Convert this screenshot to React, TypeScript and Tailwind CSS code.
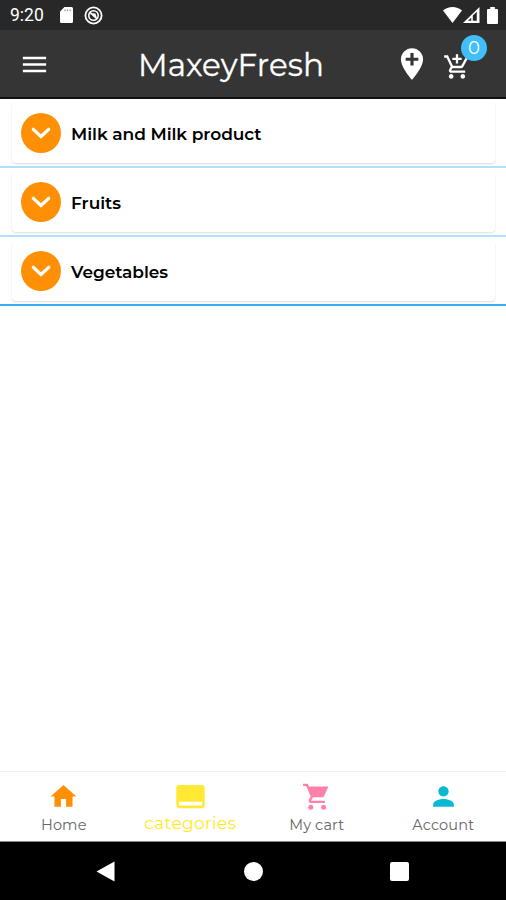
import type { ReactNode } from "react";
import { MdAddLocation, MdAddShoppingCart, MdCallToAction, MdHome, MdMenu, MdPerson } from "react-icons/md";

const categories = [
  { name: "Milk and Milk product", line: "border-[#b3e1fb]" },
  { name: "Fruits", line: "border-[#b3e1fb]" },
  { name: "Vegetables", line: "border-[#35b0e8]" },
];

function CartIcon() {
  return (
    <svg className="h-[31px] w-[31px]" viewBox="0 0 31 31" fill="#ff80a8">
      <path d="M6.5 5.6H27.4L22.6 16.3H10.6Z" />
      <path d="M2 3.9H6L11 15.6L8.8 19.4Q8.5 20.9 10 20.9H23.8" fill="none" stroke="#ff80a8" strokeWidth="2.4" />
      <circle cx="9.8" cy="26.2" r="2.5" />
      <circle cx="22.6" cy="26.2" r="2.5" />
    </svg>
  );
}

function StatusBar() {
  return (
    <div className="flex h-[30px] shrink-0 items-center bg-[#282828] pr-[8px] pl-[10px] text-white">
      <span className="w-[50px] pt-[2px] font-['Roboto',sans-serif] text-[17.5px] leading-none">9:20</span>
      <svg className="h-[16px] w-[13px]" viewBox="0 0 13 16" fill="currentColor">
        <path d="M4.5 0H11.5Q13 0 13 1.5V14.5Q13 16 11.5 16H1.5Q0 16 0 14.5V4.5Z" />
        <path d="M5 2.5v1.8M7.5 2.5v1.8M10 2.5v1.8" stroke="#999" strokeWidth="1.3" />
      </svg>
      <svg className="ml-[11px] h-[19px] w-[19px]" viewBox="0 0 19 19" fill="none" stroke="currentColor">
        <circle cx="9.5" cy="9.5" r="8.1" strokeWidth="1.8" />
        <circle cx="9.5" cy="9.5" r="4.7" strokeWidth="1.6" />
        <path d="M5.7 6.2L13 12.8M6.5 7.8L10.8 8.2L12 11.5" strokeWidth="1.6" />
      </svg>
      <svg className="ml-auto h-[16px] w-[19px]" viewBox="0 0 19 16" fill="currentColor">
        <path d="M0 3.6C5-1.2 14-1.2 19 3.6L9.5 16Z" />
      </svg>
      <svg className="ml-[1px] h-[16px] w-[17px]" viewBox="0 0 17 16" fill="currentColor" fillRule="evenodd">
        <path d="M0 16H16.5V0ZM9.8 13.8V8.6L13.8 4.8V13.8ZM5 13.8L8.2 10.7V13.8Z" />
      </svg>
      <svg className="ml-[7px] h-[17px] w-[11px]" viewBox="0 0 11 17" fill="currentColor">
        <path d="M3.2 0h4.6v2H10q1 0 1 1v13q0 1-1 1H1q-1 0-1-1V3q0-1 1-1h2.2z" />
      </svg>
    </div>
  );
}

function Header() {
  return (
    <header className="flex h-[69px] shrink-0 items-center border-b-2 border-[#111] bg-[#353535] pr-[35px] pl-[19px] text-white">
      <MdMenu size={31} className="mt-[2px]" />
      <h1 className="ml-[88px] w-[200px] pt-[4px] text-[31px] leading-none font-normal tracking-[0.05px] whitespace-nowrap [-webkit-text-stroke:0.3px_white]">
        MaxeyFresh
      </h1>
      <MdAddLocation size={38} className="ml-auto" />
      <div className="relative ml-[12px]">
        <MdAddShoppingCart size={28} className="mt-[6px]" />
        <span className="absolute -top-[12px] left-[18px] grid h-[26px] w-[26px] place-items-center rounded-full bg-[#40bffa] pt-px text-[18px] leading-none">
          0
        </span>
      </div>
    </header>
  );
}

function CategoryRow({ name, line }: { name: string; line: string }) {
  return (
    <div className={`h-[69px] border-b-2 px-[12px] pt-[4px] ${line}`}>
      <button className="flex h-[60px] w-[483px] items-center rounded-[4px] bg-white pl-[9px] text-left shadow-[0_1px_2px_rgba(0,0,0,0.14)]">
        <span className="grid h-[40px] w-[40px] place-items-center rounded-full bg-[#ff9006]">
          <svg className="h-[12px] w-[20px]" viewBox="0 0 20 12" fill="none" stroke="white" strokeWidth="3.2" strokeLinecap="round">
            <path d="M2.3 2.3L10 9.5L17.7 2.3" />
          </svg>
        </span>
        <span className="ml-[10px] pt-[2px] text-[17px] leading-none font-semibold tracking-[-0.05px] text-black">{name}</span>
      </button>
    </div>
  );
}

function Tab({ icon, label, className }: { icon: ReactNode; label: string; className: string }) {
  return (
    <button className="flex flex-1 flex-col items-center pt-[9px] pl-px">
      {icon}
      <span className={`leading-[20px] whitespace-nowrap ${className}`}>{label}</span>
    </button>
  );
}

export default function App() {
  return (
    <div className="flex h-[900px] w-[506px] flex-col overflow-hidden bg-white font-['Montserrat','Inter',sans-serif]">
      <StatusBar />
      <Header />

      <main className="flex-1">
        {categories.map((c) => (
          <CategoryRow key={c.name} {...c} />
        ))}
      </main>

      <nav className="flex h-[71px] shrink-0 border-t border-b border-t-[#f1f1f1] border-b-[#888]">
        <Tab icon={<MdHome size={31} color="#ff9006" />} label="Home" className="mt-[3px] text-[14.5px] tracking-[0.15px] text-[#666]" />
        <Tab icon={<MdCallToAction size={31} color="#ffe935" />} label="categories" className="mt-px text-[17px] tracking-[0.35px] text-[#ffe91f]" />
        <Tab icon={<CartIcon />} label="My cart" className="mt-[3px] text-[14.5px] tracking-[0.15px] text-[#666]" />
        <Tab icon={<MdPerson size={31} color="#08b9d3" />} label="Account" className="mt-[3px] text-[14.5px] tracking-[0.15px] text-[#666]" />
      </nav>

      <div className="flex h-[58px] shrink-0 items-center bg-black pl-[96px]">
        <svg className="h-[21px] w-[19px]" viewBox="0 0 19 21" fill="white">
          <path d="M18.5 0.5V20.5L0.5 10.5Z" />
        </svg>
        <span className="ml-[129px] h-[19px] w-[19px] rounded-full bg-white" />
        <span className="ml-[127px] h-[19px] w-[19px] rounded-[2px] bg-white" />
      </div>
    </div>
  );
}
